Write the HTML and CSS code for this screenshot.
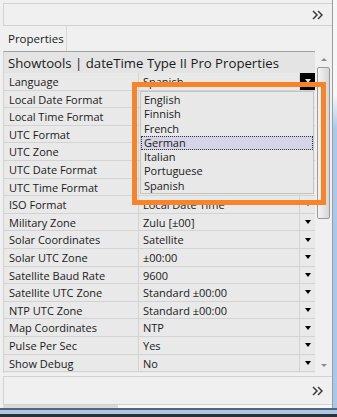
FILE: index.html
```html
<!doctype html>
<html>
    <head>
        <meta charset='utf-8'>
        <title>Properties</title>
        <link rel="stylesheet" href="styles.css">
    </head>
    <body>
        <div class='window'>
            <div class='upper'>
                <div class='main'>
                    <div class='top-gap'></div>
                    <div class='toolbar'>
                        <svg class='chevron' width='11' height='10' viewBox='0 0 11 10'><path d='M1 1l4 4-4 4M6 1l4 4-4 4' fill='none' stroke='#3a3a3a' stroke-width='1.5'/></svg>
                    </div>
                    <div class='tabs'>
                        <div class='tab'>Properties</div>
                    </div>
                    <div class='panel'>
                        <div class='grid'>
                            <div class='title'>Showtools | dateTime Type II Pro Properties</div>
                            <div class='row'><div class='name'>Language</div><div class='value'>Spanish</div><div class='btn btn-active'><i></i></div></div>
                            <div class='row'><div class='name'>Local Date Format</div><div class='value'></div><div class='btn'><i></i></div></div>
                            <div class='row'><div class='name'>Local Time Format</div><div class='value'></div><div class='btn'><i></i></div></div>
                            <div class='row'><div class='name'>UTC Format</div><div class='value'></div><div class='btn'><i></i></div></div>
                            <div class='row'><div class='name'>UTC Zone</div><div class='value'></div><div class='btn'><i></i></div></div>
                            <div class='row'><div class='name'>UTC Date Format</div><div class='value'></div><div class='btn'><i></i></div></div>
                            <div class='row'><div class='name'>UTC Time Format</div><div class='value'></div><div class='btn'><i></i></div></div>
                            <div class='row'><div class='name'>ISO Format</div><div class='value'>Local Date Time</div><div class='btn'><i></i></div></div>
                            <div class='row'><div class='name'>Military Zone</div><div class='value'>Zulu [±00]</div><div class='btn'><i></i></div></div>
                            <div class='row'><div class='name'>Solar Coordinates</div><div class='value'>Satellite</div><div class='btn'><i></i></div></div>
                            <div class='row'><div class='name'>Solar UTC Zone</div><div class='value'>±00:00</div><div class='btn'><i></i></div></div>
                            <div class='row'><div class='name'>Satellite Baud Rate</div><div class='value'>9600</div><div class='btn'><i></i></div></div>
                            <div class='row'><div class='name'>Satellite UTC Zone</div><div class='value'>Standard ±00:00</div><div class='btn'><i></i></div></div>
                            <div class='row'><div class='name'>NTP UTC Zone</div><div class='value'>Standard ±00:00</div><div class='btn'><i></i></div></div>
                            <div class='row'><div class='name'>Map Coordinates</div><div class='value'>NTP</div><div class='btn'><i></i></div></div>
                            <div class='row'><div class='name'>Pulse Per Sec</div><div class='value'>Yes</div><div class='btn'><i></i></div></div>
                            <div class='row'><div class='name'>Show Debug</div><div class='value'>No</div><div class='btn'><i></i></div></div>
                        </div>
                        <div class='scrollbar'>
                            <div class='sb-up'></div>
                            <div class='thumb'><span></span><span></span><span></span></div>
                            <div class='sb-track'></div>
                            <div class='sb-down'></div>
                        </div>
                    </div>
                    <div class='gap'></div>
                    <div class='toolbar toolbar-bottom'>
                        <svg class='chevron' width='11' height='10' viewBox='0 0 11 10'><path d='M1 1l4 4-4 4M6 1l4 4-4 4' fill='none' stroke='#3a3a3a' stroke-width='1.5'/></svg>
                    </div>
                    <div class='status'><div class='status-left'></div></div>
                </div>
                <div class='frame-right'></div>
            </div>
            <div class='frame-bottom'></div>

            <!-- open dropdown list and highlight box -->
            <ul class='dropdown'>
                <li>English</li>
                <li>Finnish</li>
                <li>French</li>
                <li class='selected'>German</li>
                <li>Italian</li>
                <li>Portuguese</li>
                <li>Spanish</li>
            </ul>
            <div class='highlight'></div>
        </div>
    </body>
</html>
```

FILE: styles.css
```css
html,body,ul,li,div {
    padding:0px;
    margin:0px;
}
ul,li {
    list-style:none;
}
body {
    width:337px;
    height:417px;
    overflow:hidden;
    background:#f0f0f0;
    font-family:'Open Sans','Noto Sans',sans-serif;
    font-size:11px;
    color:#1a1a1a;
}
.window {
    width:337px;
    height:417px;
    position:relative;
    display:flex;
    flex-direction:column;
}
.upper {
    display:flex;
    height:408px;
}
.main {
    width:329px;
    padding-left:3px;
    border-right:1px solid #9c9c9c;
    display:flex;
    flex-direction:column;
}
.frame-right {
    width:4px;
    background:linear-gradient(#f7f7f7 0, #f7f7f7 95px, #a9c8ea 130px, #a9c8ea 100%);
}
.frame-bottom {
    height:9px;
    box-sizing:border-box;
    border-top:2px solid #5a6470;
    border-bottom:3px solid #2e3238;
    background:#a9c8ea;
}
.top-gap {
    height:3px;
}
.toolbar {
    height:21px;
    border:1px solid #d2d2d2;
    border-right:none;
    display:flex;
    justify-content:flex-end;
    align-items:center;
    padding-right:9px;
}
.toolbar-bottom {
    height:27px;
}
.tabs {
    height:25px;
    display:flex;
}
.tab {
    width:58px;
    padding-left:5px;
    border-right:1px solid #d6d6d6;
    line-height:26px;
    font-size:11.5px;
}
.panel {
    display:flex;
    height:322px;
}
.grid {
    width:311px;
    border-top:1px solid #a0a0a0;
    border-left:1px solid #d2d2d2;
    background:#e9e9e9;
}
.title {
    height:21px;
    line-height:22px;
    padding-left:4px;
    font-size:13.2px;
    background:#e4e4e4;
    white-space:nowrap;
}
.row {
    display:flex;
    height:17.6px;
    box-sizing:border-box;
    border-bottom:1px solid #d3d3d3;
    line-height:17.6px;
}
.name {
    width:129px;
    padding-left:5px;
    border-right:1px solid #d3d3d3;
    white-space:nowrap;
}
.value {
    width:156px;
    padding-left:4px;
    border-right:1px solid #d3d3d3;
    white-space:nowrap;
    overflow:hidden;
}
.btn {
    flex:1;
    display:flex;
    justify-content:center;
    align-items:center;
}
.btn i {
    width:0;
    height:0;
    border-left:3.5px solid transparent;
    border-right:3.5px solid transparent;
    border-top:4px solid #000;
}
.btn-active {
    background:#000;
}
.btn-active i {
    border-top-color:#e0e0e0;
}
.scrollbar {
    width:17px;
    display:flex;
    flex-direction:column;
    align-items:center;
}
.sb-up,.sb-down {
    height:16px;
    width:100%;
    display:flex;
    justify-content:center;
    align-items:center;
}
.sb-up:after,.sb-down:after {
    content:'';
    width:0;
    height:0;
    border-left:3px solid transparent;
    border-right:3px solid transparent;
}
.sb-up:after {
    border-bottom:3px solid #8a8a8a;
}
.sb-down:after {
    border-top:3px solid #8a8a8a;
}
.thumb {
    width:11px;
    height:150px;
    border:1px solid #9a9a9a;
    border-radius:2px;
    background:linear-gradient(to right, #f4f4f4, #e2e2e2 60%, #d4d4d4);
    display:flex;
    flex-direction:column;
    justify-content:center;
    align-items:center;
    gap:1px;
}
.thumb span {
    width:5px;
    height:1px;
    background:#7a7a7a;
}
.sb-track {
    flex:1;
}
.gap {
    height:3px;
}
.status {
    height:3px;
    background:#f7f7f7;
    display:flex;
}
.status-left {
    width:115px;
    background:#dadada;
}
.dropdown {
    position:absolute;
    left:140px;
    top:91px;
    width:172px;
    height:100px;
    border:1px solid #c4c4c4;
    background:#e8e8e8;
    padding-top:1px;
}
.dropdown li {
    height:14.3px;
    line-height:14.3px;
    padding-left:3px;
    box-sizing:border-box;
}
.dropdown li.selected {
    background:#d6d5e8;
    border:1px dotted #333;
    padding-left:2px;
    line-height:12.3px;
}
.highlight {
    position:absolute;
    left:132px;
    top:82px;
    width:194px;
    height:123px;
    box-sizing:border-box;
    border:5px solid #f98328;
}
```
